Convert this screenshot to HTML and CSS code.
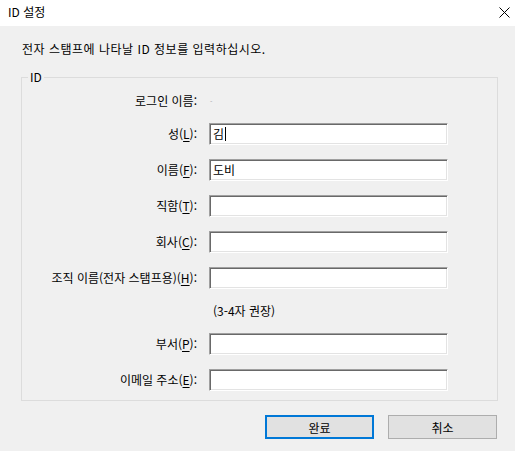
FILE: index.html
```html
<!DOCTYPE html>
<html lang="ko">
<head>
<meta charset="utf-8">
<title>ID 설정</title>
<link rel="stylesheet" href="styles.css">
</head>
<body>
<div class="window">
  <div class="titlebar">
    <span class="title">ID 설정</span>
    <span class="close" aria-label="닫기">
      <svg width="11" height="11" viewBox="0 0 11 11"><path d="M0.5 0.5 L10.5 10.5 M10.5 0.5 L0.5 10.5" stroke="#000" stroke-width="1" fill="none"/></svg>
    </span>
  </div>
  <div class="content">
    <p class="intro">전자 스탬프에 나타날 ID 정보를 입력하십시오.</p>
    <fieldset class="group">
      <legend>ID</legend>
      <div class="rows">
        <div class="row login">
          <span class="label">로그인 이름:</span>
          <span class="login-value">-</span>
        </div>
        <div class="row">
          <span class="label">성(<u>L</u>):</span>
          <div class="field">김<span class="caret"></span></div>
        </div>
        <div class="row">
          <span class="label">이름(<u>F</u>):</span>
          <div class="field">도비</div>
        </div>
        <div class="row">
          <span class="label">직함(<u>T</u>):</span>
          <div class="field"></div>
        </div>
        <div class="row">
          <span class="label">회사(<u>C</u>):</span>
          <div class="field"></div>
        </div>
        <div class="row">
          <span class="label">조직 이름(전자 스탬프용)(<u>H</u>):</span>
          <div class="field"></div>
        </div>
        <div class="row note">
          <span class="label"></span>
          <span class="hint">(3-4자 권장)</span>
        </div>
        <div class="row">
          <span class="label">부서(<u>P</u>):</span>
          <div class="field"></div>
        </div>
        <div class="row">
          <span class="label">이메일 주소(<u>E</u>):</span>
          <div class="field"></div>
        </div>
      </div>
    </fieldset>
    <div class="actions">
      <button class="btn default">완료</button>
      <button class="btn">취소</button>
    </div>
  </div>
</div>
</body>
</html>
```
FILE: styles.css
```css
html, body {
  margin: 0;
  padding: 0;
  background: #f0f0f0;
}
body {
  font-family: "Noto Sans CJK KR", "Noto Sans", sans-serif;
  font-size: 12px;
  color: #000;
  width: 515px;
  height: 451px;
  overflow: hidden;
}
.titlebar {
  height: 26px;
  box-sizing: border-box;
  background: #fff;
  display: flex;
  align-items: center;
  justify-content: space-between;
  padding: 0 5px 2px 8px;
}
.title {
  line-height: 16px;
}
.close {
  display: flex;
  width: 11px;
  height: 11px;
}
.intro {
  margin: 14px 0 0 22px;
  line-height: 18px;
  letter-spacing: 0.5px;
}
.group {
  margin: 12px 17px 0 21px;
  padding: 0 0 9px 0;
  border: 1px solid #dcdcdc;
  min-width: 0;
}
.group legend {
  margin-left: 6px;
  padding: 0 2px;
  line-height: 14px;
}
.rows {
  display: flex;
  flex-direction: column;
  gap: 14px;
  padding-top: 6px;
}
.row {
  display: grid;
  grid-template-columns: 175px 239px;
  column-gap: 12px;
  align-items: center;
  height: 22px;
}
.row.login {
  margin-bottom: -3px;
}
.row.note {
  height: 16px;
}
.label {
  text-align: right;
  white-space: nowrap;
  line-height: 16px;
}
.label u {
  text-decoration-thickness: 1px;
  text-underline-offset: 2px;
}
.login-value {
  font-size: 7px;
  color: #a8a8a8;
  padding-left: 1px;
  line-height: 10px;
}
.hint {
  padding-left: 4px;
  line-height: 16px;
}
.field {
  height: 22px;
  box-sizing: border-box;
  background: #fff;
  border: 1px solid;
  border-color: #a0a0a0 #ffffff #ffffff #a0a0a0;
  box-shadow: inset 1px 1px 0 #696969, inset -1px -1px 0 #e3e3e3;
  padding: 0 0 0 3px;
  display: flex;
  align-items: center;
  line-height: 16px;
}
.caret {
  display: inline-block;
  width: 1px;
  height: 14px;
  background: #000;
  margin-left: 1px;
}
.actions {
  display: flex;
  justify-content: flex-end;
  gap: 14px;
  margin: 14px 18px 0 0;
}
.btn {
  width: 109px;
  height: 24px;
  box-sizing: border-box;
  background: #e1e1e1;
  border: 1px solid #adadad;
  font: inherit;
  color: #000;
  padding: 0;
}
.btn.default {
  border: 2px solid #0078d7;
}
```
